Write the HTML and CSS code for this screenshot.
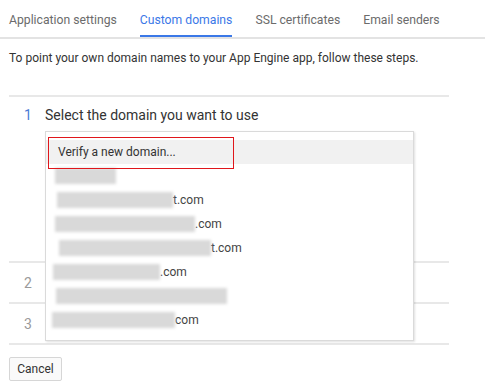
FILE: index.html
```html
<!DOCTYPE html>
<html>
<head>
<meta charset="utf-8">
<link rel="stylesheet" href="styles.css">
</head>
<body>
<div class="tabs">
  <div class="tab">Application settings</div>
  <div class="tab active">Custom domains</div>
  <div class="tab">SSL certificates</div>
  <div class="tab">Email senders</div>
</div>
<div class="content">
  <p class="intro">To point your own domain names to your App Engine app, follow these steps.</p>
  <div class="stepper">
    <div class="step step1">
      <span class="num active-num">1</span>
      <span class="title">Select the domain you want to use</span>
    </div>
    <div class="step step-small"><span class="num">2</span></div>
    <div class="step step-small"><span class="num">3</span></div>
    <div class="menu">
      <div class="item highlight">Verify a new domain...</div>
      <div class="item"><span class="blur" style="width:61px;margin-left:-2px"></span></div>
      <div class="item"><span class="blur" style="width:116px"></span>t.com</div>
      <div class="item"><span class="blur" style="width:140px;margin-left:-2px"></span>.com</div>
      <div class="item"><span class="blur" style="width:152px;margin-left:2px"></span>t.com</div>
      <div class="item"><span class="blur" style="width:107px;margin-left:-4px"></span>.com</div>
      <div class="item"><span class="blur" style="width:171px;margin-left:-1px"></span></div>
      <div class="item"><span class="blur" style="width:123px;margin-left:-5px"></span>com</div>
      <div class="annotation"></div>
    </div>
  </div>
  <button class="cancel">Cancel</button>
</div>
</body>
</html>
```

FILE: styles.css
```css
* { box-sizing: border-box; }
body {
  margin: 0;
  font-family: Roboto, "Liberation Sans", Arial, sans-serif;
  background: #fff;
  color: #333;
  width: 485px;
  height: 388px;
  overflow: hidden;
}
.tabs {
  display: flex;
  gap: 23px;
  padding-left: 9px;
  height: 39px;
  border-bottom: 2px solid #e3e3e3;
  font-size: 12.2px;
}
.tab {
  color: #6b6b6b;
  padding-top: 13px;
  height: 37px;
  border-bottom: 2px solid transparent;
}
.tab.active {
  color: #3b78e7;
  border-bottom-color: #3b78e7;
}
.content {
  padding: 0 9px;
}
.intro {
  margin: 0;
  padding-top: 11px;
  font-size: 12px;
  color: #333;
  line-height: 16px;
}
.stepper {
  position: relative;
  margin-top: 29px;
  width: 440px;
  border-top: 2px solid #e8e8e8;
}
.step {
  display: flex;
  align-items: flex-start;
  border-bottom: 2px solid #e8e8e8;
}
.step1 {
  height: 166px;
  padding-top: 9px;
}
.step-small {
  height: 41px;
  align-items: center;
}
.num {
  width: 36px;
  padding-left: 15px;
  font-size: 14px;
  color: #9a9a9a;
}
.active-num { color: #4a7bd4; }
.title {
  font-size: 14px;
  color: #333;
  line-height: 18px;
}
.step1 .num { line-height: 18px; }
.menu {
  position: absolute;
  left: 36px;
  top: 34px;
  width: 369px;
  height: 210px;
  background: #fff;
  border: 1px solid #dadada;
  box-shadow: 1px 1px 2px rgba(0,0,0,0.12);
  padding-top: 8px;
  font-size: 12px;
  color: #444;
}
.item {
  height: 24px;
  display: flex;
  align-items: center;
  padding-left: 11px;
}
.highlight {
  background: #f1f1f1;
  color: #333;
  padding-left: 12px;
}
.blur {
  display: inline-block;
  height: 16px;
  background: #d9d9d9;
  filter: blur(1.5px);
}
.annotation {
  position: absolute;
  left: 2px;
  top: 5px;
  width: 186px;
  height: 32px;
  border: 1px solid #e0161b;
}
.cancel {
  margin-top: 12px;
  width: 53px;
  height: 24px;
  border: 1px solid #d6d6d6;
  border-radius: 2px;
  background: #fafafa;
  font-family: Roboto, "Liberation Sans", Arial, sans-serif;
  font-size: 12px;
  color: #333;
  padding: 0;
}
```
